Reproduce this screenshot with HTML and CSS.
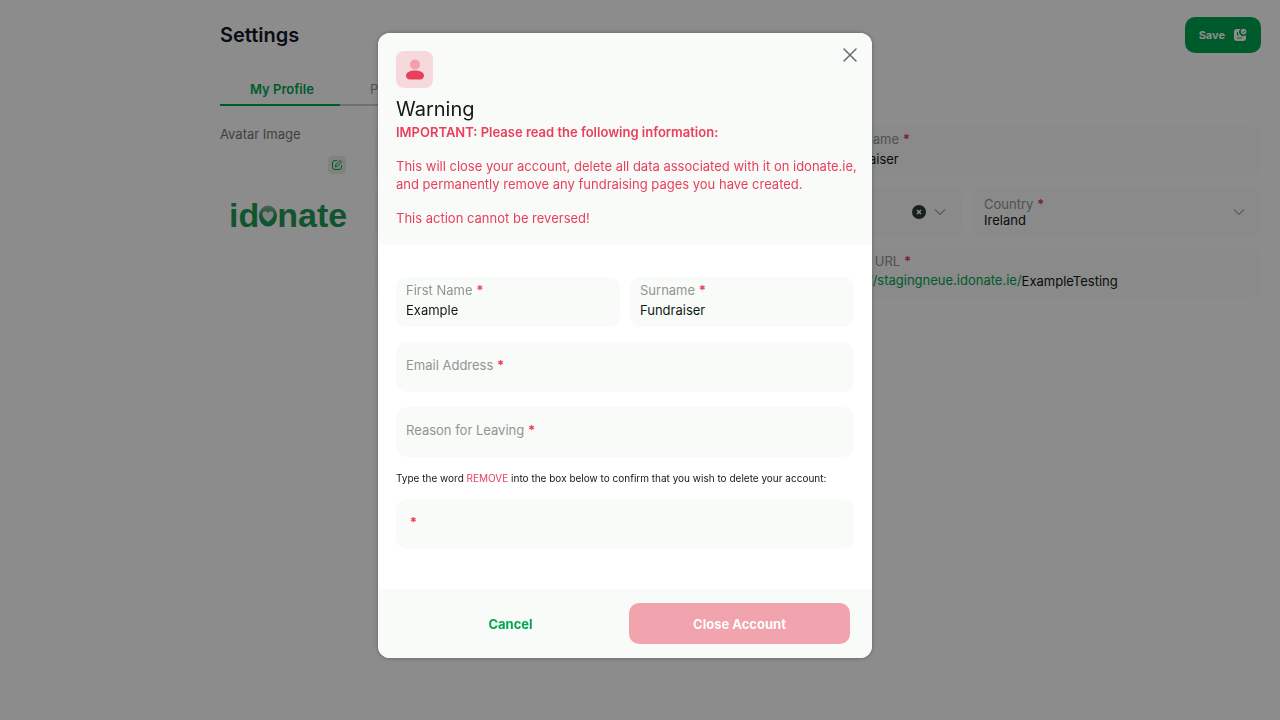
FILE: index.html
```
<!DOCTYPE html>
<html lang="en">
<head>
  <meta charset="UTF-8" />
  <meta name="viewport" content="width=device-width, initial-scale=1" />
  <title>Settings</title>
  <link rel="stylesheet" href="styles.css">
</head>
<body>

  <main class="page">
    <header class="page-header">
      <h1>Settings</h1>
      <button type="button" class="save-btn">
        Save
        <svg viewBox="0 0 14 14" width="14" height="14">
          <path d="M4 1h3.500a4 4 0 0 0 5.500 6v3a3 3 0 0 1-3 3H4a3 3 0 0 1-3-3V4a3 3 0 0 1 3-3z" fill="#fff"/>
          <circle cx="10.600" cy="3.600" r="2.800" fill="#fff"/>
          <path d="M9.300 3.700l.9.900 1.700-1.800M4.500 4v3H6M4 10h5" fill="none" stroke="#00a651" stroke-width="1"/>
        </svg>
      </button>
    </header>

    <nav class="tabs">
      <a href="#profile" class="tab active">My Profile</a>
      <a href="#password" class="tab">Password</a>
    </nav>

    <div class="profile">
      <section class="avatar">
        <h2>Avatar Image</h2>
        <button type="button" class="edit-btn" aria-label="Edit avatar">
          <svg viewBox="0 0 12 12" width="12" height="12" fill="none" stroke="#00a651" stroke-linecap="round" stroke-linejoin="round">
            <path d="M5.500 1.500H4A2.500 2.500 0 0 0 1.500 4v4A2.500 2.500 0 0 0 4 10.500h4A2.500 2.500 0 0 0 10.500 8V6.500"/>
            <path d="M4.500 7.500l.4-2L9 1.400l1.600 1.600L6.500 7.100z"/>
          </svg>
        </button>
        <div class="logo">
          <span>id</span>
          <svg viewBox="0 0 18 24" width="18" height="24">
            <defs>
              <linearGradient id="ring" x1="0" y1="0" x2="0" y2="1">
                <stop offset="0" stop-color="#8fb8a0"/>
                <stop offset="0.500" stop-color="#1f9a58"/>
              </linearGradient>
            </defs>
            <ellipse cx="9" cy="13" rx="9" ry="10.500" fill="url(#ring)"/>
            <path d="M9 19C5 16 3.500 14 3.500 11.500a2.800 2.800 0 0 1 5.500-1 2.800 2.800 0 0 1 5.500 1C14.500 14 13 16 9 19z" fill="#e6eee9"/>
          </svg>
          <span>nate</span>
        </div>
      </section>

      <form class="profile-form">
        <div class="row">
          <div class="field">
            <label for="p-first">First Name <b>*</b></label>
            <input type="text" id="p-first" value="Example">
          </div>
          <div class="field">
            <label for="p-last">Last Name <b>*</b></label>
            <input type="text" id="p-last" value="Fundraiser">
          </div>
        </div>
        <div class="row">
          <div class="field">
            <input type="text" aria-label="Phone">
          </div>
          <div class="field picker">
            <select aria-label="County"><option></option></select>
            <button type="button" class="clear-btn" aria-label="Clear county">
              <svg viewBox="0 0 14 14" width="14" height="14">
                <circle cx="7" cy="7" r="7" fill="#2f3b33"/>
                <path d="M5 5l4 4M9 5l-4 4" stroke="#fff" stroke-width="1.500"/>
              </svg>
            </button>
            <svg class="chevron" viewBox="0 0 12 12" width="12" height="12"><path d="M1 3.500l5 5 5-5"/></svg>
          </div>
          <div class="field picker">
            <div class="picker-text">
              <label for="p-country">Country <b>*</b></label>
              <select id="p-country"><option>Ireland</option></select>
            </div>
            <svg class="chevron" viewBox="0 0 12 12" width="12" height="12"><path d="M1 3.500l5 5 5-5"/></svg>
          </div>
        </div>
        <div class="row">
          <div class="field">
            <input type="text" aria-label="Display name">
          </div>
          <div class="field">
            <label for="p-url">Public URL <b>*</b></label>
            <div class="url">
              <span>https://stagingneue.idonate.ie/</span>
              <input type="text" id="p-url" value="ExampleTesting">
            </div>
          </div>
        </div>
      </form>
    </div>
  </main>

  <div class="overlay">
    <form class="modal" role="dialog" aria-labelledby="modal-title">
      <div class="modal-head">
        <button type="button" class="close-btn" aria-label="Close">
          <svg viewBox="0 0 14 14" width="14" height="14"><path d="M1 1l12 12M13 1L1 13" stroke="#666b73" stroke-width="1.500" stroke-linecap="round"/></svg>
        </button>
        <div class="badge">
          <svg viewBox="0 0 20 22" width="20" height="22">
            <circle cx="10" cy="5.500" r="5" fill="#f1a0ac"/>
            <path d="M1 16.500c0-3 4-5 9-5s9 2 9 5c0 2-1.500 4-4 4H5c-2.500 0-4-2-4-4z" fill="#e83f5b"/>
          </svg>
        </div>
        <h2 id="modal-title">Warning</h2>
        <p class="important">IMPORTANT: Please read the following information:</p>
        <p>This will close your account, delete all data associated with it on idonate.ie, and permanently remove any fundraising pages you have created.</p>
        <p>This action cannot be reversed!</p>
      </div>

      <div class="modal-body">
        <div class="row">
          <div class="field">
            <label for="first">First Name <b>*</b></label>
            <input type="text" id="first" value="Example">
          </div>
          <div class="field">
            <label for="surname">Surname <b>*</b></label>
            <input type="text" id="surname" value="Fundraiser">
          </div>
        </div>
        <div class="field empty">
          <label for="email">Email Address <b>*</b></label>
          <input type="email" id="email">
        </div>
        <div class="field empty">
          <label for="reason">Reason for Leaving <b>*</b></label>
          <input type="text" id="reason">
        </div>
        <p class="hint">Type the word <span>REMOVE</span> into the box below to confirm that you wish to delete your account:</p>
        <div class="field empty">
          <label for="confirm">&nbsp;<b>*</b></label>
          <input type="text" id="confirm">
        </div>
      </div>

      <div class="modal-foot">
        <button type="button" class="cancel-btn">Cancel</button>
        <button type="submit" class="danger-btn">Close Account</button>
      </div>
    </form>
  </div>

</body>
</html>
```
FILE: styles.css
```
* {
  box-sizing: border-box;
}

body {
  margin: 0;
  min-height: 100vh;
  font-family: Inter, sans-serif;
  font-size: 13px;
  line-height: 18px;
  color: #111a14;
  background: #fff;
}

h1, h2, p {
  margin: 0;
}

button, input, select {
  font: inherit;
  color: inherit;
  border: none;
  background: none;
  padding: 0;
  margin: 0;
}

button {
  cursor: pointer;
}

svg {
  display: block;
  flex: none;
}

/* settings page */
.page {
  margin-left: 220px;
  padding: 17px 19px 0 0;
}

.page-header {
  display: flex;
  justify-content: space-between;
  align-items: center;
}

h1 {
  font-size: 20px;
  font-weight: 600;
  line-height: 24px;
  color: #111827;
}

.save-btn {
  display: flex;
  align-items: center;
  gap: 8px;
  height: 36px;
  padding: 0 14px;
  border-radius: 10px;
  background: #00a651;
  color: #fff;
  font-size: 11px;
  font-weight: 700;
}

.tabs {
  display: flex;
  margin-top: 19px;
}

.tab {
  width: 120px;
  padding: 8px 0 6px 30px;
  border-bottom: 2px solid #c2d2c5;
  color: #8d9890;
  text-decoration: none;
}

.tab.active {
  border-color: #00a651;
  color: #00a651;
  font-weight: 600;
}

.profile {
  display: flex;
  gap: 29px;
  margin-top: 20px;
}

.avatar {
  width: 126px;
  flex: none;
}

.avatar h2 {
  font-size: 13px;
  font-weight: 400;
  line-height: 16px;
  color: #6f7a72;
}

.edit-btn {
  display: flex;
  align-items: center;
  justify-content: center;
  width: 18px;
  height: 18px;
  margin: 14px 0 0 auto;
  border-radius: 4px;
  background: #e9edea;
}

.logo {
  display: flex;
  align-items: center;
  margin: 24px 0 0 9px;
  font-family: "Liberation Sans", sans-serif;
  font-size: 34px;
  line-height: 34px;
  font-weight: 700;
  color: #1f9a58;
}

.profile-form {
  flex: 1;
  display: grid;
  gap: 11px;
}

.row {
  display: grid;
  grid-auto-flow: column;
  grid-auto-columns: 1fr;
  gap: 11px;
}

.field {
  display: flex;
  flex-direction: column;
  gap: 1px;
  min-width: 0;
  height: 50px;
  padding: 4px 10px;
  border-radius: 11px;
  background: #f9fbf9;
}

.field label {
  color: #8f9791;
}

.field b {
  color: #e83f5b;
}

.field input {
  width: 100%;
  height: 20px;
}

.picker {
  flex-direction: row;
  align-items: center;
  gap: 8px;
  padding: 4px 16px 4px 11px;
}

.picker-text {
  flex: 1;
}

.picker label,
.picker select {
  display: block;
  width: 100%;
  line-height: 16px;
  appearance: none;
}

.chevron {
  fill: none;
  stroke: #5f6a62;
}

.url {
  display: flex;
}

.url span {
  color: #00a651;
}

/* dialog */
.overlay {
  position: fixed;
  inset: 0;
  display: flex;
  align-items: center;
  justify-content: center;
  padding: 0 30px 29px 0;
  background: rgba(0, 0, 0, 0.45);
}

.modal {
  position: relative;
  width: 100%;
  max-width: 494px;
  border-radius: 12px;
  background: #fff;
  overflow: hidden;
  box-shadow: 0 0 5px rgba(0, 0, 0, 0.3);
}

.modal-head {
  padding: 18px 8px 18px 18px;
  background: #f9fbf9;
  color: #e83f5b;
}

.close-btn {
  position: absolute;
  top: 15px;
  right: 15px;
}

.badge {
  display: flex;
  align-items: center;
  justify-content: center;
  width: 37px;
  height: 37px;
  border-radius: 8px;
  background: #f7d8dd;
}

.modal-head h2 {
  margin-top: 7px;
  font-size: 20px;
  font-weight: 400;
  line-height: 28px;
  color: #111a14;
}

.modal-head p + p {
  margin-top: 16px;
}

.important {
  font-weight: 600;
}

.modal-body {
  display: grid;
  gap: 15px;
  padding: 32px 18px 40px;
}

.modal-body .row {
  gap: 10px;
}

.empty {
  justify-content: center;
  position: relative;
  padding-bottom: 8px;
}

.empty input {
  position: absolute;
  inset: 0;
  height: 100%;
  padding: 0 10px;
}

.hint {
  font-size: 10px;
  line-height: 12px;
}

.hint span {
  color: #e83f5b;
}

.modal-foot {
  display: grid;
  grid-template-columns: 1fr 1fr;
  gap: 8px;
  padding: 14px 22px;
  background: #f9fbf9;
}

.modal-foot button {
  height: 41px;
  border-radius: 10px;
  font-weight: 700;
}

.cancel-btn {
  color: #00a651;
}

.danger-btn {
  background: #f1a4ae;
  color: #fff;
}
```
